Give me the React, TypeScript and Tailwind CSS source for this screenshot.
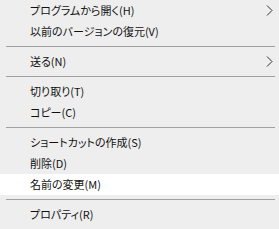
import React from 'react';

type Item = { label: string; sub?: boolean; active?: boolean } | 'sep';

const items: Item[] = [
  { label: 'プログラムから開く(H)', sub: true },
  { label: '以前のバージョンの復元(V)' },
  'sep',
  { label: '送る(N)', sub: true },
  'sep',
  { label: '切り取り(T)' },
  { label: 'コピー(C)' },
  'sep',
  { label: 'ショートカットの作成(S)' },
  { label: '削除(D)' },
  { label: '名前の変更(M)', active: true },
  'sep',
  { label: 'プロパティ(R)' },
];

const Chevron: React.FC = () => (
  <svg width="7" height="11" viewBox="0 0 7 11" className="text-[#333]">
    <path d="M1 0.5 L6 5.5 L1 10.5" fill="none" stroke="currentColor" strokeWidth="1" />
  </svg>
);

const App: React.FC = () => {
  return (
    <div
      className="w-[279px] h-[229px] overflow-hidden bg-[#eeeeee] text-[#111] text-[11px] leading-none [font-feature-settings:'palt']"
      style={{ fontFamily: '"Noto Sans CJK JP", "Noto Sans", sans-serif' }}
    >
      {items.map((it, i) =>
        it === 'sep' ? (
          <div key={i} className="h-[9px] flex items-center pl-[6px] pr-[4px]">
            <div className="h-px w-full bg-[#a0a0a0]" />
          </div>
        ) : (
          <div
            key={i}
            className={`h-[21px] flex items-center justify-between pl-[30px] pr-[6px] ${it.active ? 'bg-white' : ''}`}
          >
            <span>{it.label}</span>
            {it.sub && <Chevron />}
          </div>
        )
      )}
    </div>
  );
};

export default App;
